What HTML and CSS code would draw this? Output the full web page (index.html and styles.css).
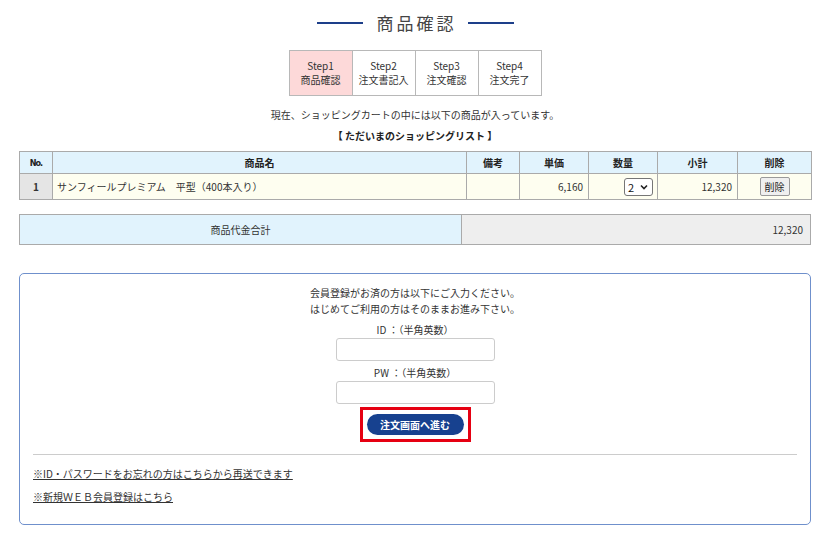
FILE: index.html
```html
<!DOCTYPE html>
<html lang="ja">
<head>
<meta charset="utf-8">
<title>商品確認</title>
<link rel="stylesheet" href="styles.css">
</head>
<body>
<div class="page">
  <h1 class="title"><span class="bar"></span><span class="title-text">商品確認</span><span class="bar"></span></h1>

  <table class="steps">
    <tr>
      <td class="on">Step1<br>商品確認</td>
      <td>Step2<br>注文書記入</td>
      <td>Step3<br>注文確認</td>
      <td>Step4<br>注文完了</td>
    </tr>
  </table>

  <p class="lead">現在、ショッピングカートの中には以下の商品が入っています。</p>
  <p class="list-title">【 ただいまのショッピングリスト 】</p>

  <table class="cart">
    <colgroup>
      <col class="c-no"><col class="c-name"><col class="c-note"><col class="c-price"><col class="c-qty"><col class="c-sub"><col class="c-del">
    </colgroup>
    <tr class="head">
      <th class="no-h">No.</th><th>商品名</th><th>備考</th><th>単価</th><th>数量</th><th>小計</th><th>削除</th>
    </tr>
    <tr class="row">
      <td class="no">1</td>
      <td class="name">サンフィールプレミアム　平型（400本入り）</td>
      <td></td>
      <td class="num">6,160</td>
      <td class="qty"><span class="select">2<svg width="8" height="6" viewBox="0 0 8 6"><path d="M1 1.5 L4 4.5 L7 1.5" fill="none" stroke="#222" stroke-width="1.6"/></svg></span></td>
      <td class="num">12,320</td>
      <td class="del"><span class="del-btn">削除</span></td>
    </tr>
  </table>

  <table class="total">
    <tr>
      <td class="total-label">商品代金合計</td>
      <td class="total-value">12,320</td>
    </tr>
  </table>

  <div class="login">
    <p class="note">会員登録がお済の方は以下にご入力ください。<br>はじめてご利用の方はそのままお進み下さい。</p>
    <p class="label">ID ：（半角英数）</p>
    <div class="field"><span class="input"></span></div>
    <p class="label pw">PW ：（半角英数）</p>
    <div class="field"><span class="input"></span></div>
    <div class="go-wrap"><span class="go">注文画面へ進む</span></div>
    <div class="rule"></div>
    <p class="link first">※ID・パスワードをお忘れの方はこちらから再送できます</p>
    <p class="link second">※新規ＷＥＢ会員登録はこちら</p>
  </div>
</div>
</body>
</html>
```

FILE: styles.css
```css
* { box-sizing: border-box; }
body {
  margin: 0;
  background: #fff;
  color: #333;
  font-family: "Noto Sans CJK JP", "Noto Sans", sans-serif;
  font-size: 10px;
}
p { margin: 0; }
.page {
  width: 792px;
  margin: 0 19px;
  display: flex;
  flex-direction: column;
}
.title {
  margin: 11px 0 0;
  height: 24px;
  display: flex;
  align-items: center;
  justify-content: center;
  font-weight: normal;
  font-size: 17px;
  color: #444;
  font-family: "Noto Sans CJK JP", serif;
}
.bar {
  width: 46px;
  height: 2px;
  background: #1d3f8a;
}
.title-text {
  letter-spacing: 3px;
  margin: 0 11px 0 14px;
  line-height: 24px;
}
.steps {
  margin: 15px auto 0;
  border-collapse: collapse;
}
.steps td {
  width: 63px;
  height: 45px;
  border: 1px solid #b8b8b8;
  text-align: center;
  line-height: 14px;
  font-size: 10px;
  color: #333;
  padding: 0;
}
.steps td.on { background: #fdd9d9; }
.lead {
  text-align: center;
  line-height: 16px;
  margin-top: 11px;
}
.list-title {
  text-align: center;
  font-weight: bold;
  line-height: 16px;
  margin-top: 5px;
  color: #222;
}
.cart {
  margin-top: 7px;
  border-collapse: collapse;
  width: 792px;
  table-layout: fixed;
}
.c-no { width: 33px; }
.c-name { width: 414px; }
.c-note { width: 53px; }
.c-price { width: 69px; }
.c-qty { width: 69px; }
.c-sub { width: 80px; }
.c-del { width: 74px; }
.cart th, .cart td {
  border: 1px solid #aaa;
  padding: 0 4px;
  font-size: 10px;
}
.cart .head th {
  background: #e1f3fd;
  height: 22px;
  font-weight: bold;
  color: #222;
}
.cart .no-h { font-size: 9px; letter-spacing: -1px; font-family: "Liberation Sans Narrow", "DejaVu Sans Condensed", sans-serif; }
.cart .row td {
  background: #fefef0;
  height: 26px;
}
.cart .row td.no {
  background: #e5e5e5;
  text-align: center;
  font-weight: bold;
}
.cart .num { text-align: right; padding-right: 5px; }
.cart .qty { text-align: right; padding-right: 4px; }
.select {
  display: inline-flex;
  align-items: center;
  justify-content: space-between;
  width: 29px;
  height: 18px;
  border: 1px solid #767676;
  border-radius: 3px;
  background: #fff;
  padding: 0 4px 0 3px;
  font-size: 11px;
  color: #111;
  vertical-align: middle;
}
.cart .del { text-align: center; }
.del-btn {
  display: inline-block;
  width: 30px;
  height: 19px;
  line-height: 17px;
  border: 1px solid #999;
  border-radius: 2px;
  background: #efefef;
  color: #222;
  vertical-align: middle;
}
.total {
  margin-top: 14px;
  border-collapse: collapse;
  width: 792px;
  table-layout: fixed;
}
.total td {
  border: 1px solid #aaa;
  height: 30px;
  font-size: 10px;
}
.total-label {
  width: 442px;
  background: #e1f3fd;
  text-align: center;
}
.total-value {
  background: #eee;
  text-align: right;
  padding-right: 7px;
}
.login {
  margin-top: 28px;
  border: 1px solid #6f90cc;
  border-radius: 5px;
  padding: 11px 13px 19px;
  display: flex;
  flex-direction: column;
  align-items: center;
}
.note {
  text-align: center;
  line-height: 16px;
}
.label {
  line-height: 16px;
  margin-top: 5px;
}
.label.pw { margin-top: 4px; }
.field { display: flex; justify-content: center; }
.input {
  display: block;
  width: 159px;
  height: 23px;
  border: 1px solid #ccc;
  border-radius: 3px;
  background: #fff;
}
.go-wrap {
  margin-top: 3px;
  border: 3px solid #e60012;
  padding: 4px 4px;
}
.go {
  display: block;
  width: 97px;
  height: 21px;
  line-height: 21px;
  border-radius: 11px;
  background: #17418f;
  color: #fff;
  text-align: center;
  font-size: 10px;
  font-weight: bold;
}
.rule {
  align-self: stretch;
  height: 1px;
  background: #ccc;
  margin-top: 12px;
}
.link {
  align-self: flex-start;
  line-height: 16px;
  text-decoration: underline;
  color: #333;
}
.link.first { margin-top: 11px; }
.link.second { margin-top: 7px; }
```
